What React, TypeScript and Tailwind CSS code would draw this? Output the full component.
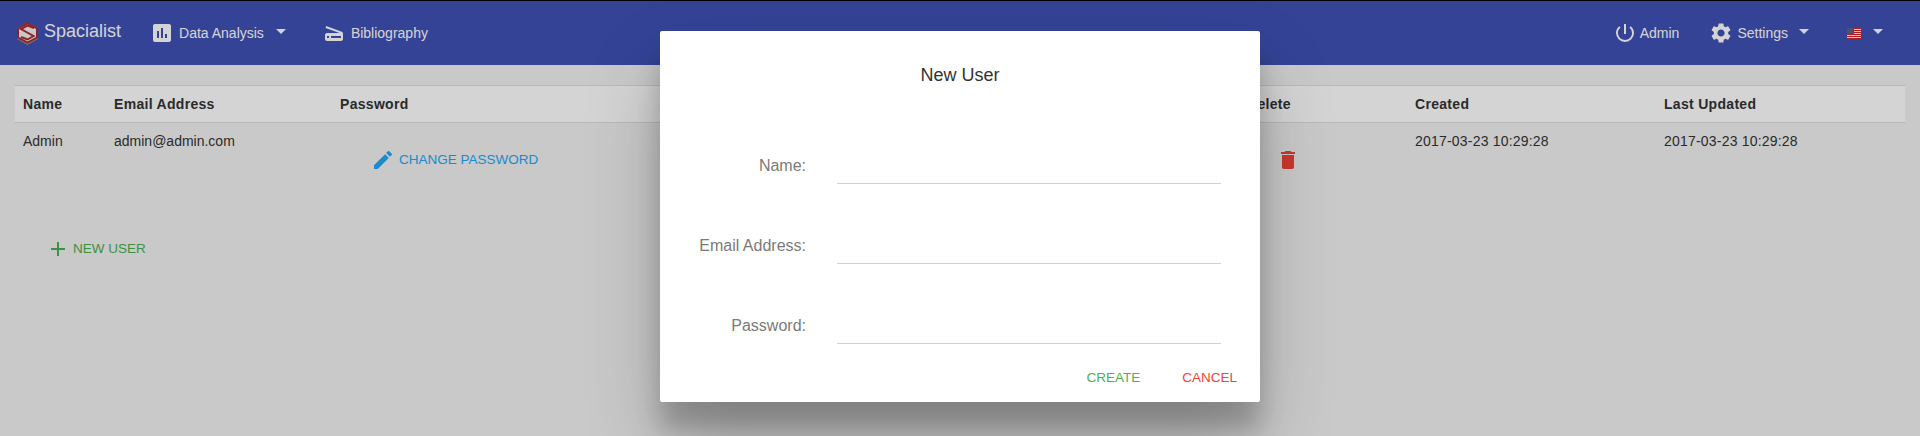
import { MdAdd, MdAssessment, MdDelete, MdEdit, MdPowerSettingsNew, MdScanner, MdSettings } from "react-icons/md";

function Caret() {
  return <span className="ml-3 h-0 w-0 -translate-y-[2px] border-x-[5px] border-t-[5px] border-x-transparent border-t-white" />;
}

function Logo() {
  return (
    <svg width="21" height="23" viewBox="0 0 21 23" className="shrink-0">
      <polygon points="10.5,0 21,6 21,17 10.5,23 0,17 0,6" fill="#a08a5c" />
      <polygon points="10.5,0 21,6 21,16 10.5,21.5 0,16 0,6" fill="#a52a3a" />
      <polygon points="10.5,2.5 19,7 19,15 10.5,19.5 2,15 2,7" fill="#f4f0e8" />
      <path d="M17 6 L10.5 3.5 L4 7 L16.5 14 L10.5 17.5 L4 15" fill="none" stroke="#a52a3a" strokeWidth="2" />
    </svg>
  );
}

function Flag() {
  return (
    <svg width="14" height="11" viewBox="0 0 14 11" className="shrink-0">
      <rect width="14" height="11" fill="#f4f4f4" />
      <rect y="0" width="14" height="1" fill="#d2232a" />
      <rect y="2" width="14" height="1" fill="#d2232a" />
      <rect y="4" width="14" height="1" fill="#d2232a" />
      <rect y="6" width="14" height="1" fill="#d2232a" />
      <rect y="8" width="14" height="1" fill="#d2232a" />
      <rect y="10" width="14" height="1" fill="#d2232a" />
      <rect width="7" height="6" fill="#5a5f8c" />
    </svg>
  );
}

function FormRow({ label }: { label: string }) {
  return (
    <div className="flex h-[40px] items-start">
      <label className="w-[146px] pt-[1px] text-right text-[16px] leading-[20px] text-[#7a7a7a]">{label}</label>
      <div className="ml-[31px] h-[29px] w-[384px] border-b border-[#d0d0d0]" />
    </div>
  );
}

export default function App() {
  return (
    <div className="relative h-[436px] w-[1920px] overflow-hidden bg-[#f2f2f2] font-['Liberation_Sans',Arial,sans-serif] text-[14px] text-[#333]">
      <nav className="flex h-[65px] items-center border-t border-black bg-[#3f51b5] text-white">
        <div className="ml-[17px] flex items-center gap-[6px]">
          <Logo />
          <span className="-translate-y-[2px] text-[18px]">Spacialist</span>
        </div>
        <div className="ml-[29px] flex items-center">
          <MdAssessment size={24} />
          <span className="ml-[5px]">Data Analysis</span>
          <Caret />
        </div>
        <div className="ml-[36px] flex items-center gap-[5px]">
          <MdScanner size={24} />
          <span>Bibliography</span>
        </div>
        <div className="ml-auto flex items-center">
          <MdPowerSettingsNew size={24} />
          <span className="ml-[3px]">Admin</span>
          <MdSettings size={24} className="ml-[30px]" />
          <span className="ml-[4px] mr-[-1px]">Settings</span>
          <Caret />
          <span className="ml-[38px]"><Flag /></span>
          <Caret />
          <span className="w-[37px]" />
        </div>
      </nav>

      <main className="px-[15px] pt-[20px]">
        <table className="w-[1890px] table-fixed border-collapse text-left">
          <colgroup>
            <col className="w-[91px]" />
            <col className="w-[226px]" />
            <col className="w-[907px]" />
            <col className="w-[168px]" />
            <col className="w-[249px]" />
            <col />
          </colgroup>
          <thead>
            <tr className="h-[37px] border-y border-[#e0e0e0] bg-white tracking-[0.3px]">
              <th className="px-[8px] font-bold">Name</th>
              <th className="px-[8px] font-bold">Email Address</th>
              <th className="px-[8px] font-bold">Password</th>
              <th className="px-[8px] font-bold">Delete</th>
              <th className="px-[8px] font-bold">Created</th>
              <th className="px-[8px] font-bold">Last Updated</th>
            </tr>
          </thead>
          <tbody>
            <tr className="align-top">
              <td className="px-[8px] pt-[8px]">Admin</td>
              <td className="px-[8px] pt-[8px]">admin@admin.com</td>
              <td className="px-[8px] pt-[8px]">
                <div className="ml-[31px] mt-[17px] flex items-center gap-[4px] text-[#20a8f8]">
                  <MdEdit size={24} />
                  <span className="text-[13.5px]">CHANGE PASSWORD</span>
                </div>
              </td>
              <td className="px-[8px] pt-[8px]">
                <div className="ml-[29px] mt-[17px] text-[#f44336]">
                  <MdDelete size={24} />
                </div>
              </td>
              <td className="px-[8px] pt-[8px] tracking-[0.2px]">2017-03-23 10:29:28</td>
              <td className="px-[8px] pt-[8px] tracking-[0.2px]">2017-03-23 10:29:28</td>
            </tr>
          </tbody>
        </table>
        <div className="ml-[31px] mt-[65px] flex items-center gap-[3px] text-[#4caf50]">
          <MdAdd size={24} />
          <span className="text-[13.5px]">NEW USER</span>
        </div>
      </main>

      {/* backdrop + dialog sit over the page */}
      <div className="absolute inset-0 bg-black/[0.17]" />
      <div className="absolute left-[660px] top-[31px] h-[371px] w-[600px] rounded-[2px] bg-white shadow-[0_27px_24px_0_rgba(0,0,0,0.2),0_40px_77px_0_rgba(0,0,0,0.22)]">
        <h2 className="pt-[34px] text-center text-[18px] leading-[20px] text-[#333]">New User</h2>
        <div className="mt-[70px] flex flex-col gap-[40px]">
          <FormRow label="Name:" />
          <FormRow label="Email Address:" />
          <FormRow label="Password:" />
        </div>
        <div className="absolute bottom-[14px] right-[23px] flex gap-[42px] text-[13.5px]">
          <span className="text-[#4caf50]">CREATE</span>
          <span className="text-[#f44336]">CANCEL</span>
        </div>
      </div>
    </div>
  );
}
